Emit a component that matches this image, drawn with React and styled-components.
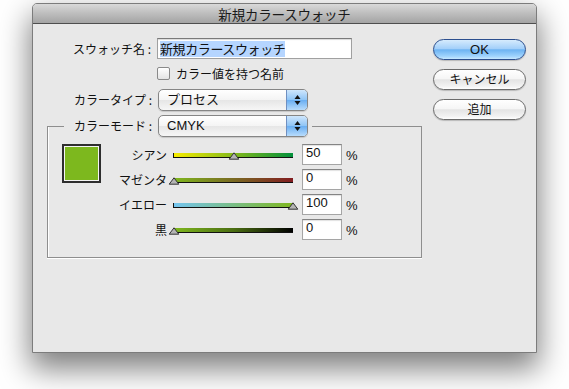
import React from "react";
import styled, { createGlobalStyle } from "styled-components";

const Global = createGlobalStyle`
  html, body { margin: 0; padding: 0; background: #ffffff; }
  body { font-family: "Liberation Sans", "Noto Sans CJK JP", sans-serif; color: #111; }
`;

const Stage = styled.div`
  width: 569px;
  height: 389px;
  padding: 3px 0 0 32px;
  box-sizing: border-box;
  overflow: hidden;
`;

const Window = styled.div`
  width: 505px;
  height: 350px;
  box-sizing: border-box;
  background: #e8e8e8;
  border: 1px solid #7c7c7c;
  border-radius: 5px 5px 0 0;
  box-shadow: 0 14px 30px 2px rgba(0, 0, 0, 0.5);
  display: flex;
  flex-direction: column;
`;

const TitleBar = styled.div`
  height: 19px;
  border-bottom: 1px solid #4e4e4e;
  border-radius: 4px 4px 0 0;
  background: linear-gradient(#d9d9d9, #bdbdbd 50%, #a4a4a4);
  display: flex;
  align-items: center;
  justify-content: center;
  font-family: "Noto Sans CJK JP", sans-serif;
  font-size: 13.5px;
  line-height: 16px;
  color: #1a1a1a;
  letter-spacing: -0.2px;
`;

const Body = styled.div`
  display: flex;
  padding: 14px 0 0 14px;
`;

const LeftCol = styled.div`
  width: 375px;
  display: flex;
  flex-direction: column;
`;

const RightCol = styled.div`
  margin-left: 11px;
  padding-top: 1px;
  display: flex;
  flex-direction: column;
  gap: 9px;
`;

const FormRow = styled.div`
  display: flex;
  align-items: center;
  margin-top: ${(p) => p.$mt || 0}px;
`;

const Label = styled.div`
  width: ${(p) => p.$w}px;
  text-align: right;
  font-family: "Noto Sans CJK JP", sans-serif;
  font-size: 12px;
  line-height: 14px;
  white-space: nowrap;
  margin-right: ${(p) => p.$mr}px;
  color: #111;
`;

const TextInput = styled.div`
  width: 195px;
  height: 21px;
  box-sizing: border-box;
  background: #fff;
  border: 1px solid #a0a0a0;
  border-top-color: #7a7a7a;
  box-shadow: inset 0 1px 1px rgba(0, 0, 0, 0.15);
  display: flex;
  align-items: center;
  padding-left: 2px;
  font-family: "Noto Sans CJK JP", sans-serif;
  font-size: 13px;
`;

const Selected = styled.span`
  background: #b5d5ff;
  line-height: 16px;
  letter-spacing: -0.4px;
`;

const CheckRow = styled.label`
  display: flex;
  align-items: center;
  gap: 6px;
  margin-left: 110px;
  height: 13px;
  font-family: "Noto Sans CJK JP", sans-serif;
  font-size: 12px;
  line-height: 13px;
`;

const CheckBox = styled.span`
  width: 13px;
  height: 13px;
  box-sizing: border-box;
  border: 1px solid #8a8a8a;
  border-radius: 2px;
  background: linear-gradient(#ffffff, #e4e4e4);
  box-shadow: inset 0 1px 0 #fff;
`;

const Popup = styled.div`
  width: 150px;
  height: 22px;
  box-sizing: border-box;
  border: 1px solid #858585;
  border-radius: 5px;
  display: flex;
  overflow: hidden;
  background: linear-gradient(#ffffff, #f4f4f4 50%, #e6e6e6 51%, #f6f6f6);
  box-shadow: 0 1px 1px rgba(0, 0, 0, 0.15);
`;

const PopupText = styled.div`
  flex: 1;
  padding-left: 8px;
  display: flex;
  align-items: center;
  font-family: "Liberation Sans", "Noto Sans CJK JP", sans-serif;
  font-size: 13px;
  line-height: 16px;
  color: #111;
`;

const PopupArrow = styled.div`
  width: 20px;
  border-left: 1px solid #6f8fc0;
  background: linear-gradient(#cfe6fc, #8ec4f6 50%, #69aef2 51%, #b8dcfc);
  display: flex;
  align-items: center;
  justify-content: center;
`;

const GroupBox = styled.fieldset`
  margin: 4px 0 0 0;
  padding: 0;
  width: 375px;
  box-sizing: border-box;
  border: 1px solid #8e8e8e;
  box-shadow: inset 1px 0 0 #fff, 0 1px 0 #fff;
  min-inline-size: 0;
`;

const Legend = styled.legend`
  margin-left: 16px;
  padding: 0 4px 0 0;
  display: flex;
  align-items: center;
`;

const GroupContent = styled.div`
  display: flex;
  align-items: flex-start;
  padding: 7px 0 17px 14px;
`;

const Swatch = styled.div`
  width: 39px;
  height: 39px;
  box-sizing: border-box;
  border: 2px solid #2e2e2e;
  background: #7db81e;
  box-shadow: inset 0 0 0 1px #f4f4f4;
`;

const SliderList = styled.div`
  display: flex;
  flex-direction: column;
  gap: 4px;
`;

const SliderRow = styled.div`
  display: flex;
  align-items: center;
  height: 21px;
`;

const Track = styled.div`
  position: relative;
  width: 120px;
  height: 5px;
  box-sizing: border-box;
  margin-left: 6px;
  margin-top: 1px;
  border-left: 1px solid #111;
  border-bottom: 1px solid #111;
  background: ${(p) => p.$grad};
`;

const Thumb = styled.svg`
  position: absolute;
  bottom: -3px;
  width: 11px;
  height: 8px;
  transform: translateX(-50%);
`;

const NumInput = styled.div`
  width: 40px;
  height: 21px;
  box-sizing: border-box;
  margin-left: 9px;
  background: #fff;
  border: 1px solid #a5a5a5;
  border-top-color: #848484;
  box-shadow: inset 0 1px 1px rgba(0, 0, 0, 0.12);
  padding: 0 0 0 3px;
  font-size: 13px;
  line-height: 16px;
`;

const Percent = styled.div`
  margin-left: 4px;
  margin-top: 2px;
  font-size: 13px;
  line-height: 16px;
`;

const Button = styled.div`
  width: 93px;
  height: 21px;
  box-sizing: border-box;
  border-radius: 11px;
  border: 1px solid ${(p) => (p.$primary ? "#2c4f8e" : "#6c6c6c")};
  background: ${(p) =>
    p.$primary
      ? "linear-gradient(#d6ebfd, #a4d0fa 45%, #6db3f2 52%, #9fd3fd 85%, #c8e8ff)"
      : "linear-gradient(#ffffff, #f6f6f6 45%, #e4e4e4 52%, #f2f2f2 85%, #ffffff)"};
  box-shadow: 0 1px 1px rgba(0, 0, 0, 0.2);
  display: flex;
  align-items: center;
  justify-content: center;
  font-family: "Liberation Sans", "Noto Sans CJK JP", sans-serif;
  font-size: ${(p) => (p.$primary ? 13 : 12)}px;
  line-height: 16px;
  color: #111;
`;

const Arrows = () => (
  <svg width="7" height="12" viewBox="0 0 7 12">
    <path d="M3.5 1 L6.5 5 L0.5 5 Z" fill="#111" />
    <path d="M0.5 7 L6.5 7 L3.5 11 Z" fill="#111" />
  </svg>
);

const sliders = [
  { label: "シアン", value: 50, grad: "linear-gradient(90deg, #f6ec00, #7fb71c 52%, #02903c)" },
  { label: "マゼンタ", value: 0, grad: "linear-gradient(90deg, #7fb71e, #7a6a22 50%, #821c20)" },
  { label: "イエロー", value: 100, grad: "linear-gradient(90deg, #74c4ee, #7fb71e)" },
  { label: "黒", value: 0, grad: "linear-gradient(90deg, #7fb71e, #4b6e12 50%, #000)" },
];

export default function App() {
  return (
    <>
      <Global />
      <Stage>
        <Window>
          <TitleBar>新規カラースウォッチ</TitleBar>
          <Body>
            <LeftCol>
              <FormRow>
                <Label $w={104} $mr={6}>スウォッチ名 :</Label>
                <TextInput>
                  <Selected>新規カラースウォッチ</Selected>
                </TextInput>
              </FormRow>
              <FormRow $mt={8}>
                <CheckRow>
                  <CheckBox />
                  カラー値を持つ名前
                </CheckRow>
              </FormRow>
              <FormRow $mt={9}>
                <Label $w={105} $mr={6}>カラータイプ :</Label>
                <Popup>
                  <PopupText>プロセス</PopupText>
                  <PopupArrow>
                    <Arrows />
                  </PopupArrow>
                </Popup>
              </FormRow>
              <GroupBox>
                <Legend>
                  <Label $w={88} $mr={6}>カラーモード :</Label>
                  <Popup>
                    <PopupText>CMYK</PopupText>
                    <PopupArrow>
                      <Arrows />
                    </PopupArrow>
                  </Popup>
                </Legend>
                <GroupContent>
                  <Swatch />
                  <SliderList>
                    {sliders.map((s) => (
                      <SliderRow key={s.label}>
                        <Label $w={66} $mr={0}>{s.label}</Label>
                        <Track $grad={s.grad}>
                          <Thumb viewBox="0 0 11 8" style={{ left: `${s.value}%` }}>
                            <path d="M5.5 0.8 L10.3 7.2 L0.7 7.2 Z" fill="#b4b4b4" stroke="#333" strokeWidth="1" strokeLinejoin="round" />
                          </Thumb>
                        </Track>
                        <NumInput>{s.value}</NumInput>
                        <Percent>%</Percent>
                      </SliderRow>
                    ))}
                  </SliderList>
                </GroupContent>
              </GroupBox>
            </LeftCol>
            <RightCol>
              <Button $primary>OK</Button>
              <Button>キャンセル</Button>
              <Button>追加</Button>
            </RightCol>
          </Body>
        </Window>
      </Stage>
    </>
  );
}
